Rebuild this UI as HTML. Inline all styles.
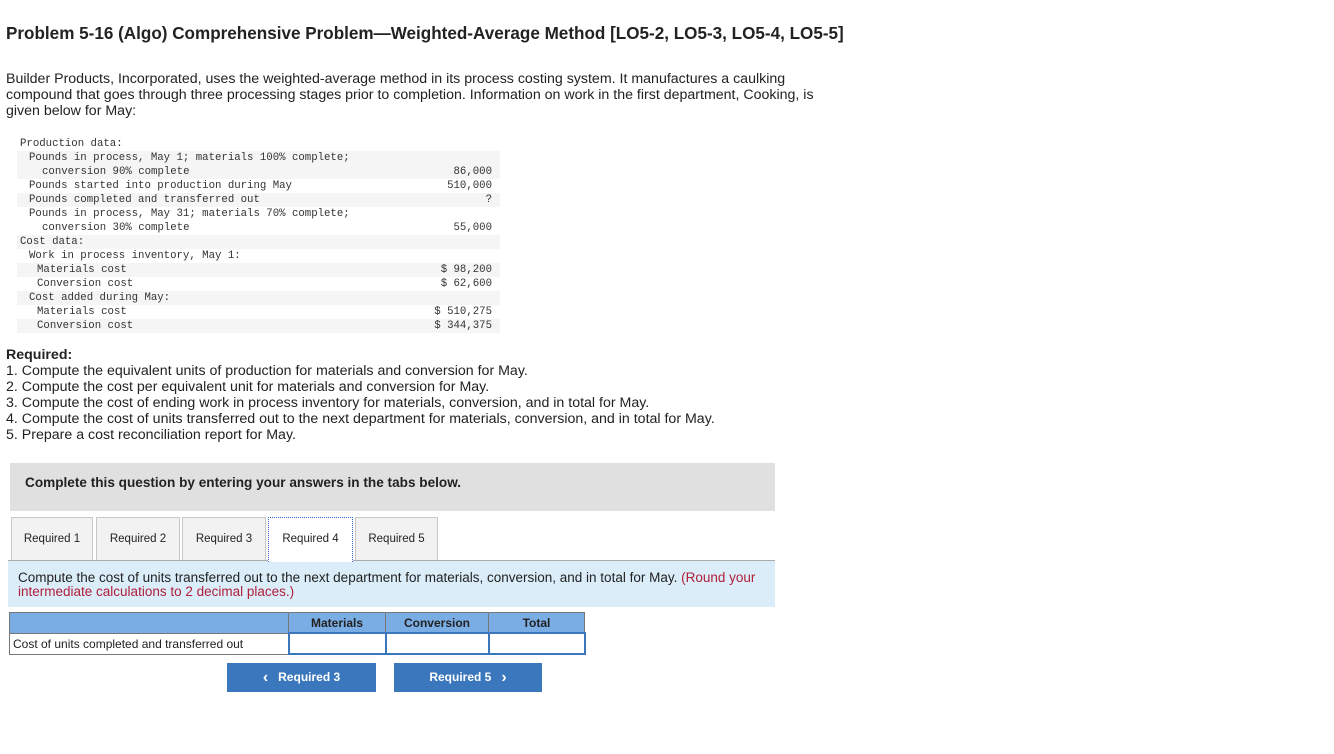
<!DOCTYPE html>
<html><head><meta charset="utf-8"><style>
body{margin:0;background:#fff;font-family:"Liberation Sans",Arial,sans-serif;color:#222;width:1334px;height:754px;position:relative;overflow:hidden}
.a{position:absolute}
h1{position:absolute;left:6px;top:24px;margin:0;font-size:17.1px;font-weight:bold;color:#222;white-space:nowrap}
.p{left:6px;top:71px;font-size:14.2px;line-height:16px;width:840px}
.dt{left:17px;top:137px;width:483px;font-family:"Liberation Mono",monospace;font-size:10.7px;color:#333}
.r{height:14px;line-height:14px;position:relative;white-space:pre}
.r span{position:absolute;right:8px;top:0}
.s{background:#f5f5f5}
.i0{padding-left:3px}.i1{padding-left:12px}.i2{padding-left:25px}.i3{padding-left:20px}
.req{left:6px;top:347px;font-size:14.2px;line-height:16px}
.box{left:10px;top:463px;width:765px;height:48px;background:#e0e0e0;font-size:13.6px;font-weight:bold;line-height:40px;text-indent:15px}
.tab{position:absolute;top:517px;height:43px;width:82px;background:#f2f2f2;border:1px solid #c8c8c8;border-bottom:none;font-size:11.5px;line-height:43px;text-align:center;box-sizing:border-box}
.info{left:8px;top:560px;width:767px;height:47px;background:#dbedf9;border-top:1px solid #aaa;font-size:13.5px;line-height:14px;padding:10px 10px;box-sizing:border-box}
table{position:absolute;left:9px;top:612px;border-collapse:collapse;font-size:12px}
td{border:1px solid #777;height:19px;padding:0 3px}
.btn{position:absolute;top:663px;height:29px;background:#3a77bd;color:#fff;font-size:12px;font-weight:bold;line-height:29px;text-align:center}
.btn b{font-size:16px;vertical-align:-1px}
</style></head><body>
<h1>Problem 5-16 (Algo) Comprehensive Problem—Weighted-Average Method [LO5-2, LO5-3, LO5-4, LO5-5]</h1>
<div class="a p">Builder Products, Incorporated, uses the weighted-average method in its process costing system. It manufactures a caulking<br>compound that goes through three processing stages prior to completion. Information on work in the first department, Cooking, is<br>given below for May:</div>
<div class="a dt">
<div class="r i0">Production data:</div>
<div class="s"><div class="r i1">Pounds in process, May 1; materials 100% complete;</div><div class="r i2">conversion 90% complete<span>86,000</span></div></div>
<div class="r i1">Pounds started into production during May<span>510,000</span></div>
<div class="r s i1">Pounds completed and transferred out<span>?</span></div>
<div class="r i1">Pounds in process, May 31; materials 70% complete;</div>
<div class="r i2">conversion 30% complete<span>55,000</span></div>
<div class="r s i0">Cost data:</div>
<div class="r i1">Work in process inventory, May 1:</div>
<div class="r s i3">Materials cost<span>$ 98,200</span></div>
<div class="r i3">Conversion cost<span>$ 62,600</span></div>
<div class="r s i1">Cost added during May:</div>
<div class="r i3">Materials cost<span>$ 510,275</span></div>
<div class="r s i3">Conversion cost<span>$ 344,375</span></div>
</div>
<div class="a req"><b>Required:</b><br>1. Compute the equivalent units of production for materials and conversion for May.<br>2. Compute the cost per equivalent unit for materials and conversion for May.<br>3. Compute the cost of ending work in process inventory for materials, conversion, and in total for May.<br>4. Compute the cost of units transferred out to the next department for materials, conversion, and in total for May.<br>5. Prepare a cost reconciliation report for May.</div>
<div class="a box">Complete this question by entering your answers in the tabs below.</div>
<div class="tab" style="left:11px">Required 1</div>
<div class="tab" style="left:96px;width:84px">Required 2</div>
<div class="tab" style="left:182px;width:84px">Required 3</div>
<div class="tab" style="left:268px;width:85px;background:#fff;border:1px dotted #36c;border-bottom:none;z-index:2;height:45px">Required 4</div>
<div class="tab" style="left:355px;width:83px">Required 5</div>
<div class="a info">Compute the cost of units transferred out to the next department for materials, conversion, and in total for May. <span style="color:#b0203a">(Round your intermediate calculations to 2 decimal places.)</span></div>
<table>
<tr style="background:#7aade4;font-weight:bold;text-align:center"><td style="width:272px"></td><td style="width:90px">Materials</td><td style="width:96px">Conversion</td><td style="width:89px">Total</td></tr>
<tr><td>Cost of units completed and transferred out</td><td style="border:2px solid #3a77bd"></td><td style="border:2px solid #3a77bd"></td><td style="border:2px solid #3a77bd"></td></tr>
</table>
<div class="btn" style="left:227px;width:149px"><b>‹</b>&nbsp;&nbsp; Required 3</div>
<div class="btn" style="left:394px;width:148px">Required 5 &nbsp;&nbsp;<b>›</b></div>
</body></html>
